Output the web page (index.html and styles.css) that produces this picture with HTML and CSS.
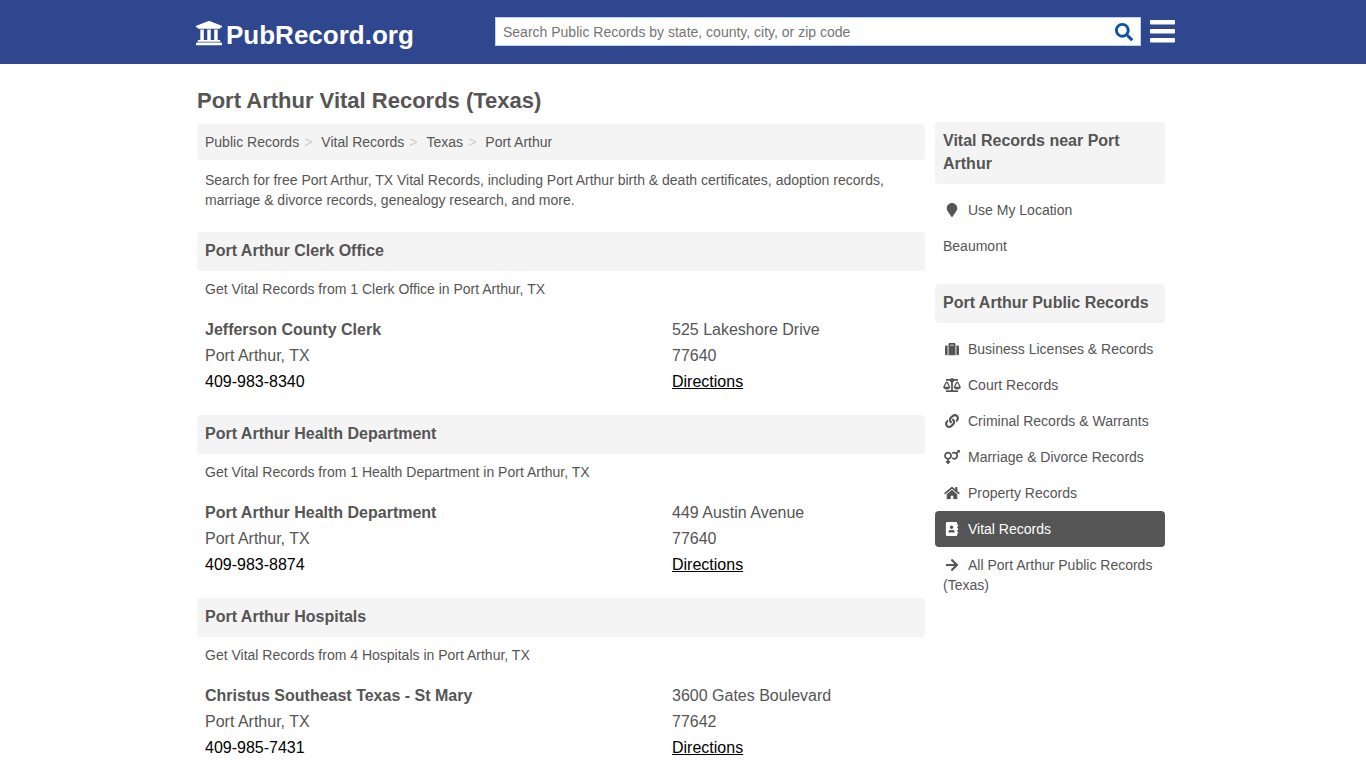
FILE: index.html
```
<!DOCTYPE html>
<html lang="en">
<head>
	<meta charset="UTF-8">
	<meta name="viewport" content="width=device-width, initial-scale=1">
	<title>Port Arthur Vital Records (Texas)</title>
	<link rel="stylesheet" href="styles.css">
</head>
<body>
	<header class="header">
		<div class="header_in">
			<a class="logo" href="#">
				<svg viewBox="16 50 480 430" aria-hidden="true"><path d="M496 128v16a8 8 0 0 1-8 8h-24v12c0 6.627-5.373 12-12 12H60c-6.627 0-12-5.373-12-12v-12H24a8 8 0 0 1-8-8v-16a8 8 0 0 1 4.941-7.392l232-88a7.996 7.996 0 0 1 6.118 0l232 88A8 8 0 0 1 496 128zm-24 304H40c-13.255 0-24 10.745-24 24v16a8 8 0 0 0 8 8h464a8 8 0 0 0 8-8v-16c0-13.255-10.745-24-24-24zM96 192v192H60c-6.627 0-12 5.373-12 12v20h416v-20c0-6.627-5.373-12-12-12h-36V192h-64v192h-64V192h-64v192h-64V192H96z"/></svg>
				<span>PubRecord.org</span>
			</a>
			<form class="search" action="#">
				<input type="text" name="q" aria-label="Search Public Records" placeholder="Search Public Records by state, county, city, or zip code">
				<button type="submit" aria-label="Search">
					<svg viewBox="0 0 512 512"><path d="M505 442.7L405.3 343c-4.5-4.5-10.6-7-17-7H372c27.6-35.3 44-79.7 44-128C416 93.1 322.9 0 208 0S0 93.1 0 208s93.1 208 208 208c48.3 0 92.7-16.4 128-44v16.3c0 6.4 2.5 12.5 7 17l99.7 99.7c9.4 9.4 24.6 9.4 33.9 0l28.3-28.3c9.4-9.4 9.4-24.6.1-34zM208 336c-70.7 0-128-57.2-128-128 0-70.7 57.2-128 128-128 70.7 0 128 57.2 128 128 0 70.7-57.2 128-128 128z"/></svg>
				</button>
			</form>
			<button class="menu_btn" type="button" aria-label="Menu">
				<svg viewBox="0 0 25 23"><path d="M1 0h23a1 1 0 0 1 1 1v2.600a1 1 0 0 1-1 1H1a1 1 0 0 1-1-1V1a1 1 0 0 1 1-1zM1 9h23a1 1 0 0 1 1 1v2.600a1 1 0 0 1-1 1H1a1 1 0 0 1-1-1V10a1 1 0 0 1 1-1zM1 18h23a1 1 0 0 1 1 1v2.600a1 1 0 0 1-1 1H1a1 1 0 0 1-1-1V19a1 1 0 0 1 1-1z"/></svg>
			</button>
		</div>
	</header>

	<div class="wrap">
		<h1>Port Arthur Vital Records (Texas)</h1>
		<div class="cols">
			<main class="main">
				<nav aria-label="Breadcrumb">
					<ol class="crumbs">
						<li><a href="#">Public Records</a></li>
						<li><a href="#">Vital Records</a></li>
						<li><a href="#">Texas</a></li>
						<li><a href="#">Port Arthur</a></li>
					</ol>
				</nav>
				<p class="intro">Search for free Port Arthur, TX Vital Records, including Port Arthur birth &amp; death certificates, adoption records, marriage &amp; divorce records, genealogy research, and more.</p>

				<section class="group">
					<h2>Port Arthur Clerk Office</h2>
					<p>Get Vital Records from 1 Clerk Office in Port Arthur, TX</p>
					<div class="office">
						<div>
							<strong>Jefferson County Clerk</strong><br>
							Port Arthur, TX<br>
							<a class="tel" href="tel:409-983-8340">409-983-8340</a>
						</div>
						<div>
							525 Lakeshore Drive<br>
							77640<br>
							<a href="#">Directions</a>
						</div>
					</div>
				</section>

				<section class="group">
					<h2>Port Arthur Health Department</h2>
					<p>Get Vital Records from 1 Health Department in Port Arthur, TX</p>
					<div class="office">
						<div>
							<strong>Port Arthur Health Department</strong><br>
							Port Arthur, TX<br>
							<a class="tel" href="tel:409-983-8874">409-983-8874</a>
						</div>
						<div>
							449 Austin Avenue<br>
							77640<br>
							<a href="#">Directions</a>
						</div>
					</div>
				</section>

				<section class="group">
					<h2>Port Arthur Hospitals</h2>
					<p>Get Vital Records from 4 Hospitals in Port Arthur, TX</p>
					<div class="office">
						<div>
							<strong>Christus Southeast Texas - St Mary</strong><br>
							Port Arthur, TX<br>
							<a class="tel" href="tel:409-985-7431">409-985-7431</a>
						</div>
						<div>
							3600 Gates Boulevard<br>
							77642<br>
							<a href="#">Directions</a>
						</div>
					</div>
				</section>
			</main>

			<aside class="side">
				<h2>Vital Records near Port Arthur</h2>
				<ul>
					<li><a href="#"><svg viewBox="0 0 384 512"><path d="M172.268 501.67C26.97 291.031 0 269.413 0 192 0 85.961 85.961 0 192 0s192 85.961 192 192c0 77.413-26.97 99.031-172.268 309.67-9.535 13.774-29.93 13.773-39.464 0z"/></svg>Use My Location</a></li>
					<li><a href="#">Beaumont</a></li>
				</ul>
				<h2>Port Arthur Public Records</h2>
				<ul>
					<li><a href="#"><svg viewBox="0 0 512 512"><path d="M128 480h256V80c0-26.5-21.5-48-48-48H176c-26.5 0-48 21.5-48 48v400zm64-384h128v32H192V96zm320 80v256c0 26.5-21.5 48-48 48h-48V128h48c26.5 0 48 21.5 48 48zM96 480H48c-26.5 0-48-21.5-48-48V176c0-26.5 21.5-48 48-48h48v352z"/></svg>Business Licenses &amp; Records</a></li>
					<li><a href="#"><svg viewBox="0 0 640 512"><path d="M256 336h-.02c0-16.18 1.34-8.73-85.05-181.51-17.65-35.29-68.19-35.36-85.87 0C-2.06 328.75.02 320.33.02 336H0c0 44.18 57.31 80 128 80s128-35.82 128-80zM128 176l72 144H56l72-144zm511.98 160c0-16.18 1.34-8.73-85.05-181.51-17.65-35.29-68.19-35.36-85.87 0-87.12 174.26-85.04 165.84-85.04 181.51H384c0 44.18 57.31 80 128 80s128-35.82 128-80h-.02zM440 320l72-144 72 144H440zm88 128H352V153.25c23.51-10.29 41.16-31.48 46.39-57.25H528c8.84 0 16-7.16 16-16V48c0-8.84-7.16-16-16-16H383.64C369.04 12.68 346.09 0 320 0s-49.04 12.68-63.64 32H112c-8.84 0-16 7.16-16 16v32c0 8.84 7.16 16 16 16h129.61c5.23 25.76 22.87 46.96 46.39 57.25V448H112c-8.84 0-16 7.16-16 16v32c0 8.84 7.16 16 16 16h416c8.84 0 16-7.16 16-16v-32c0-8.84-7.16-16-16-16z"/></svg>Court Records</a></li>
					<li><a href="#"><svg viewBox="0 0 512 512"><path d="M326.612 185.391c59.747 59.809 58.927 155.698.36 214.59-.11.12-.24.25-.36.37l-67.2 67.2c-59.27 59.27-155.699 59.262-214.96 0-59.27-59.26-59.27-155.7 0-214.96l37.106-37.106c9.84-9.84 26.786-3.3 27.294 10.606.648 17.722 3.826 35.527 9.69 52.721 1.986 5.822.567 12.262-3.783 16.612l-13.087 13.087c-28.026 28.026-28.905 73.66-1.155 101.96 28.024 28.579 74.086 28.749 102.325.51l67.2-67.19c28.191-28.191 28.073-73.757 0-101.83-3.701-3.694-7.429-6.564-10.341-8.569a16.037 16.037 0 0 1-6.947-12.606c-.396-10.567 3.348-21.456 11.698-29.806l21.054-21.055c5.521-5.521 14.182-6.199 20.584-1.731a152.482 152.482 0 0 1 20.522 17.197zM467.547 44.449c-59.261-59.262-155.69-59.27-214.96 0l-67.2 67.2c-.12.12-.25.25-.36.37-58.566 58.892-59.387 154.781.36 214.59a152.454 152.454 0 0 0 20.521 17.196c6.402 4.468 15.064 3.789 20.584-1.731l21.054-21.055c8.35-8.35 12.094-19.239 11.698-29.806a16.037 16.037 0 0 0-6.947-12.606c-2.912-2.005-6.64-4.875-10.341-8.569-28.073-28.073-28.191-73.639 0-101.83l67.2-67.19c28.239-28.239 74.3-28.069 102.325.51 27.75 28.3 26.872 73.934-1.155 101.96l-13.087 13.087c-4.35 4.35-5.769 10.79-3.783 16.612 5.864 17.194 9.042 34.999 9.69 52.721.509 13.906 17.454 20.446 27.294 10.606l37.106-37.106c59.271-59.259 59.271-155.699.001-214.959z"/></svg>Criminal Records &amp; Warrants</a></li>
					<li><a href="#"><svg viewBox="0 0 576 512"><path d="M564 0h-79c-10.7 0-16 12.9-8.5 20.5l16.9 16.9-48.7 48.7C422.5 72.1 396.2 64 368 64c-33.7 0-64.6 11.6-89.2 30.9 14 16.7 25 36 32.1 57.1 14.5-14.8 34.7-24 57.1-24 44.1 0 80 35.9 80 80s-35.9 80-80 80c-22.3 0-42.6-9.2-57.1-24-7.1 21.1-18 40.4-32.1 57.1 24.5 19.4 55.5 30.9 89.2 30.9 79.5 0 144-64.5 144-144 0-28.2-8.1-54.5-22.1-76.7l48.7-48.7 16.9 16.9c2.4 2.4 5.4 3.5 8.4 3.5 6.2 0 12.1-4.8 12.1-12V12c0-6.6-5.4-12-12-12zM144 64C64.5 64 0 128.5 0 208c0 68.5 47.9 125.9 112 140.4V400H76c-6.6 0-12 5.4-12 12v40c0 6.6 5.4 12 12 12h36v36c0 6.6 5.4 12 12 12h40c6.6 0 12-5.4 12-12v-36h36c6.6 0 12-5.4 12-12v-40c0-6.6-5.4-12-12-12h-36v-51.6c64.1-14.6 112-71.9 112-140.4 0-79.5-64.5-144-144-144zm0 224c-44.1 0-80-35.9-80-80s35.9-80 80-80 80 35.9 80 80-35.9 80-80 80z"/></svg>Marriage &amp; Divorce Records</a></li>
					<li><a href="#"><svg viewBox="0 0 576 512"><path d="M280.37 148.26L96 300.11V464a16 16 0 0 0 16 16l112.06-.29a16 16 0 0 0 15.92-16V368a16 16 0 0 1 16-16h64a16 16 0 0 1 16 16v95.64a16 16 0 0 0 16 16.05L464 480a16 16 0 0 0 16-16V300L295.67 148.26a12.19 12.19 0 0 0-15.3 0zM571.6 251.47L488 182.56V44.05a12 12 0 0 0-12-12h-56a12 12 0 0 0-12 12v72.61L318.47 43a48 48 0 0 0-61 0L4.34 251.47a12 12 0 0 0-1.6 16.9l25.5 31A12 12 0 0 0 45.15 301l235.22-193.74a12.19 12.19 0 0 1 15.3 0L530.9 301a12 12 0 0 0 16.9-1.6l25.5-31a12 12 0 0 0-1.7-16.93z"/></svg>Property Records</a></li>
					<li><a class="on" href="#"><svg viewBox="0 0 448 512"><path d="M436 160c6.600 0 12-5.400 12-12v-40c0-6.600-5.400-12-12-12h-20V48c0-26.500-21.500-48-48-48H48C21.500 0 0 21.500 0 48v416c0 26.500 21.500 48 48 48h320c26.500 0 48-21.500 48-48v-48h20c6.600 0 12-5.400 12-12v-40c0-6.600-5.400-12-12-12h-20v-64h20c6.600 0 12-5.400 12-12v-40c0-6.600-5.400-12-12-12h-20v-64h20zm-228-32c35.300 0 64 28.700 64 64s-28.700 64-64 64-64-28.700-64-64 28.700-64 64-64zm112 236.800c0 10.600-10 19.200-22.400 19.200H118.400C106 384 96 375.400 96 364.800v-19.200c0-31.800 30.100-57.600 67.200-57.600h5c12.300 5.100 25.700 8 39.800 8s27.600-2.900 39.800-8h5c37.100 0 67.200 25.800 67.200 57.600v19.200z"/></svg>Vital Records</a></li>
					<li><a href="#"><svg viewBox="0 0 448 512"><path d="M190.5 66.9l22.2-22.2c9.4-9.4 24.6-9.4 33.9 0L441 239c9.4 9.4 9.4 24.6 0 33.9L246.6 467.3c-9.4 9.4-24.6 9.4-33.9 0l-22.2-22.2c-9.5-9.5-9.3-25 .4-34.3L311.4 296H24c-13.3 0-24-10.7-24-24v-32c0-13.3 10.7-24 24-24h287.4L190.9 101.2c-9.8-9.3-10-24.8-.4-34.3z"/></svg>All Port Arthur Public Records (Texas)</a></li>
				</ul>
			</aside>
		</div>
	</div>
</body>
</html>
```
FILE: styles.css
```
*{
	margin: 0;
	padding: 0;
	box-sizing: border-box;
}
body{
	background: #fff;
	color: #555;
	font: 14px/20px Arial, "Liberation Sans", sans-serif;
}
svg{
	fill: currentColor;
}
a{
	color: #555;
	text-decoration: none;
}
ul,ol{
	list-style: none;
}
button{
	border: 0;
	background: none;
	cursor: pointer;
}

/* header */
.header{
	background: #2e478f;
}
.header_in{
	display: flex;
	align-items: center;
	max-width: 984px;
	min-height: 64px;
	margin: 0 auto;
	padding-left: 5px;
}
.logo{
	display: flex;
	align-items: center;
	gap: 4px;
	width: 299px;
	padding-top: 6px;
	color: #fff;
	font-size: 26px;
	font-weight: bold;
	line-height: 32px;
}
.logo svg{
	width: 26px;
	height: 25px;
	margin-bottom: 4px;
}
.search{
	display: flex;
	flex: 1;
	height: 29px;
	margin-bottom: 1px;
	border: 1px solid #bcd3f0;
	background: #fff;
}
.search input{
	flex: 1;
	min-width: 0;
	padding: 0 7px;
	border: 0;
	outline: 0;
	background: none;
	font: inherit;
	color: #555;
}
.search input::placeholder{
	color: #757575;
}
.search button{
	width: 32px;
	color: #0b55a0;
}
.search button svg{
	display: block;
	width: 18px;
	height: 18px;
	margin: 0 auto;
}
.menu_btn{
	margin: 0 0 2px 9px;
	color: #fff;
}
.menu_btn svg{
	display: block;
	width: 25px;
	height: 23px;
}

/* page */
.wrap{
	max-width: 980px;
	margin: 0 auto;
	padding: 23px 8px 8px 4px;
}
h1{
	font-size: 22px;
	line-height: 28px;
}
h2{
	padding: 7px 8px 9px;
	border-radius: 4px;
	background: #f4f4f4;
	font-size: 16px;
	line-height: 23px;
}
.cols{
	display: flex;
	align-items: flex-start;
	gap: 10px;
	padding-top: 7px;
}
.main{
	flex: 1;
	min-width: 0;
	padding-top: 2px;
}
.crumbs{
	display: flex;
	flex-wrap: wrap;
	padding: 8px;
	border-radius: 4px;
	background: #f4f4f4;
}
.crumbs li + li:before{
	content: ">";
	padding: 0 9px 0 5px;
	color: #ccc;
}
.intro{
	padding: 10px 8px 2px;
}
.group{
	padding-top: 20px;
}
.group p{
	padding: 8px 8px 0;
}
.office{
	display: grid;
	grid-template-columns: 1fr 245px;
	padding: 18px 8px 0;
	font-size: 16px;
	line-height: 26px;
}
.office a{
	color: #000;
	text-decoration: underline;
}
.office .tel{
	text-decoration: none;
}

/* sidebar */
.side{
	width: 230px;
}
.side ul{
	padding: 8px 0 20px;
}
.side li a{
	display: block;
	padding: 8px;
	border-radius: 4px;
}
.side li svg{
	width: 18px;
	height: 14px;
	margin-right: 7px;
	vertical-align: -2px;
}
.side .on{
	background: #555;
	color: #fff;
}
```
